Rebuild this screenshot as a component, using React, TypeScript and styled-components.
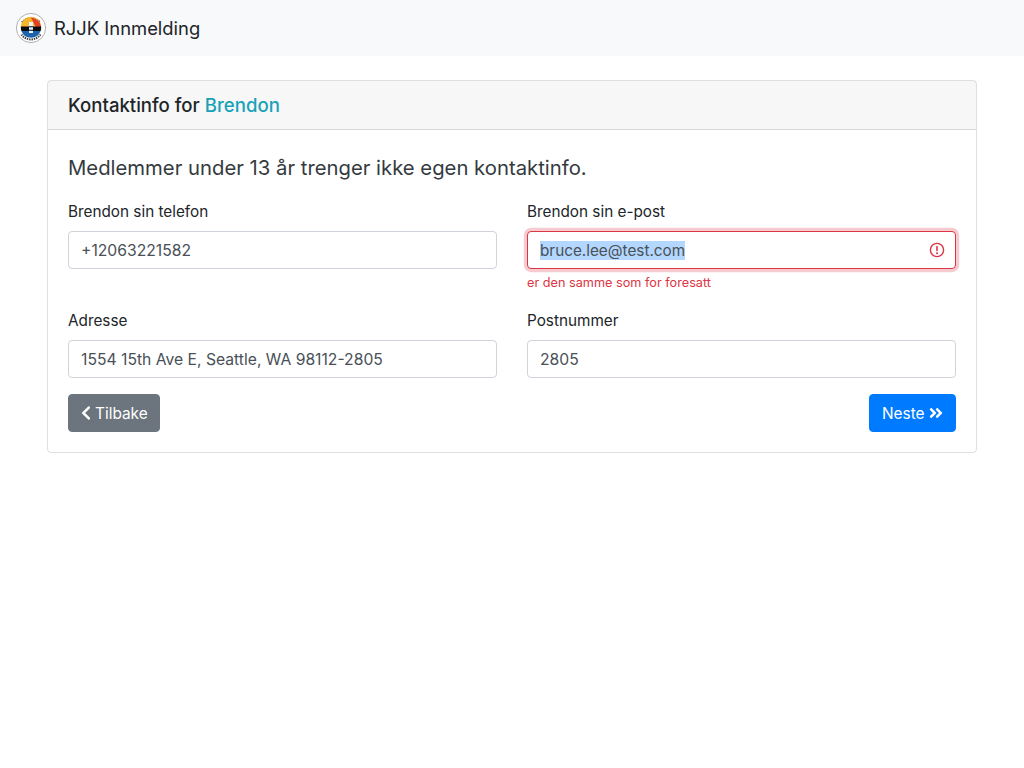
import React, { useEffect, useRef } from 'react';
import styled, { createGlobalStyle } from 'styled-components';
import { FaAngleDoubleRight, FaChevronLeft } from 'react-icons/fa';

const GlobalStyle = createGlobalStyle`
  * { box-sizing: border-box; }
  body {
    margin: 0;
    background: #fff;
    color: #212529;
    font-family: Inter, "Liberation Sans", sans-serif;
    font-size: 16px;
    line-height: 1.5;
  }
`;

const Navbar = styled.nav`
  display: flex;
  align-items: center;
  gap: 8px;
  height: 56px;
  padding: 0 16px;
  background: #f8f9fa;
`;

const Brand = styled.span`
  padding-top: 2px;
  font-size: 18.4px;
  color: #212529;
`;

const Container = styled.main`
  width: 930px;
  margin: 24px auto 0;
`;

const Card = styled.section`
  border: 1px solid rgba(0, 0, 0, 0.125);
  border-radius: 4px;
`;

const CardHeader = styled.header`
  height: 49px;
  padding: 2px 20px 0;
  display: flex;
  align-items: center;
  background: rgba(0, 0, 0, 0.03);
  border-bottom: 1px solid rgba(0, 0, 0, 0.125);
  font-size: 18.6px;
  font-weight: 500;
`;

const Name = styled.span`
  color: #17a2b8;
  margin-left: 5px;
`;

const CardBody = styled.div`
  padding: 20px;
`;

const Lead = styled.p`
  margin: 3px 0 16px;
  font-size: 20.3px;
  line-height: 30px;
  color: #343a40;
`;

const FormGrid = styled.div`
  display: grid;
  grid-template-columns: 1fr 1fr;
  column-gap: 30px;
`;

const FormGroup = styled.div`
  margin-bottom: 16px;
  min-width: 0;
`;

const Label = styled.label`
  display: block;
  margin-bottom: 8px;
  padding-top: 2px;
  font-size: 15.3px;
  line-height: 22px;
`;

const Input = styled.input<{ $invalid?: boolean }>`
  display: block;
  width: 100%;
  height: 38px;
  padding: 6px ${(p) => (p.$invalid ? '38px' : '12px')} 6px 12px;
  font: inherit;
  font-size: ${(p) => (p.$invalid ? '15.3px' : '15.7px')};
  color: #495057;
  background: #fff;
  border: 1px solid ${(p) => (p.$invalid ? '#dc3545' : '#ced4da')};
  border-radius: 4px;
  outline: none;
  box-shadow: ${(p) => (p.$invalid ? '0 0 0 3.2px rgba(220, 53, 69, 0.25)' : 'none')};

  &::selection {
    background: #b3d7fe;
    color: #495057;
  }
`;

const InputWrap = styled.div`
  position: relative;
`;

const InvalidIcon = styled.svg`
  position: absolute;
  top: 11px;
  right: 11px;
  width: 16px;
  height: 16px;
`;

const Feedback = styled.div`
  margin-top: 4px;
  font-size: 12.7px;
  line-height: 19.2px;
  color: #dc3545;
`;

const Actions = styled.div`
  display: flex;
  justify-content: space-between;
`;

const Button = styled.button<{ $variant: 'primary' | 'secondary' }>`
  display: inline-flex;
  align-items: center;
  gap: 4px;
  width: ${(p) => (p.$variant === 'primary' ? '87px' : '92px')};
  height: 38px;
  padding: 0 12px;
  font: inherit;
  font-size: 15.4px;
  white-space: nowrap;
  color: #fff;
  background: ${(p) => (p.$variant === 'primary' ? '#007bff' : '#6c757d')};
  border: 1px solid ${(p) => (p.$variant === 'primary' ? '#007bff' : '#6c757d')};
  border-radius: 4px;

  svg {
    width: ${(p) => (p.$variant === 'primary' ? '14px' : '10px')};
    height: 16px;
    flex: none;
  }
`;

const Logo = () => (
  <svg width="30" height="30" viewBox="0 0 30 30" aria-hidden="true">
    <circle cx="15" cy="15" r="14.6" fill="#fff" stroke="#9c9c9c" strokeWidth="0.8" />
    <path d="M6 9.5a11.6 11.6 0 0 1 18 0" fill="none" stroke="#3c3c3c" strokeWidth="2" strokeDasharray="1.4 0.9" />
    <path d="M5.5 21.5a11.6 11.6 0 0 0 19 0" fill="none" stroke="#3c3c3c" strokeWidth="2" strokeDasharray="1.4 0.9" />
    <path d="M4.8 14a10.2 10.2 0 0 1 20.4 0z" fill="#f7b52c" />
    <path d="M15 4.8a10.2 10.2 0 0 1 10.2 9.2h-5.4z" fill="#e0402a" />
    <path d="M4.9 13.6h20.2l.1 1.4-.5 3H5.300l-.5-3z" fill="#0c0c0c" />
    <path d="M5.400 18h19.200a10.200 10.200 0 0 1-19.200 0z" fill="#1c63ad" />
    <rect x="13" y="9" width="4" height="11" fill="#eef2f6" />
    <rect x="13" y="13" width="4" height="1.4" fill="#2a4a80" />
    <rect x="13" y="16.6" width="4" height="1.4" fill="#2a4a80" />
  </svg>
);

const App: React.FC = () => {
  const emailRef = useRef<HTMLInputElement>(null);

  // e-post feltet er markert i skjermbildet
  useEffect(() => {
    emailRef.current?.focus();
    emailRef.current?.select();
  }, []);

  return (
    <>
      <GlobalStyle />
      <Navbar>
        <Logo />
        <Brand>RJJK Innmelding</Brand>
      </Navbar>
      <Container>
        <Card>
          <CardHeader>
            Kontaktinfo for<Name>Brendon</Name>
          </CardHeader>
          <CardBody>
            <Lead>Medlemmer under 13 år trenger ikke egen kontaktinfo.</Lead>
            <FormGrid>
              <FormGroup>
                <Label>Brendon sin telefon</Label>
                <Input defaultValue="+12063221582" />
              </FormGroup>
              <FormGroup>
                <Label>Brendon sin e-post</Label>
                <InputWrap>
                  <Input ref={emailRef} $invalid defaultValue="bruce.lee@test.com" />
                  <InvalidIcon viewBox="0 0 16 16" aria-hidden="true">
                    <circle cx="8" cy="8" r="6.6" fill="none" stroke="#dc3545" strokeWidth="1.4" />
                    <rect x="7.2" y="4" width="1.6" height="5.2" rx="0.6" fill="#dc3545" />
                    <circle cx="8" cy="11.2" r="1" fill="#dc3545" />
                  </InvalidIcon>
                </InputWrap>
                <Feedback>er den samme som for foresatt</Feedback>
              </FormGroup>
              <FormGroup>
                <Label>Adresse</Label>
                <Input defaultValue="1554 15th Ave E, Seattle, WA 98112-2805" />
              </FormGroup>
              <FormGroup>
                <Label>Postnummer</Label>
                <Input defaultValue="2805" />
              </FormGroup>
            </FormGrid>
            <Actions>
              <Button $variant="secondary">
                <FaChevronLeft />
                Tilbake
              </Button>
              <Button $variant="primary">
                Neste
                <FaAngleDoubleRight />
              </Button>
            </Actions>
          </CardBody>
        </Card>
      </Container>
    </>
  );
};

export default App;
